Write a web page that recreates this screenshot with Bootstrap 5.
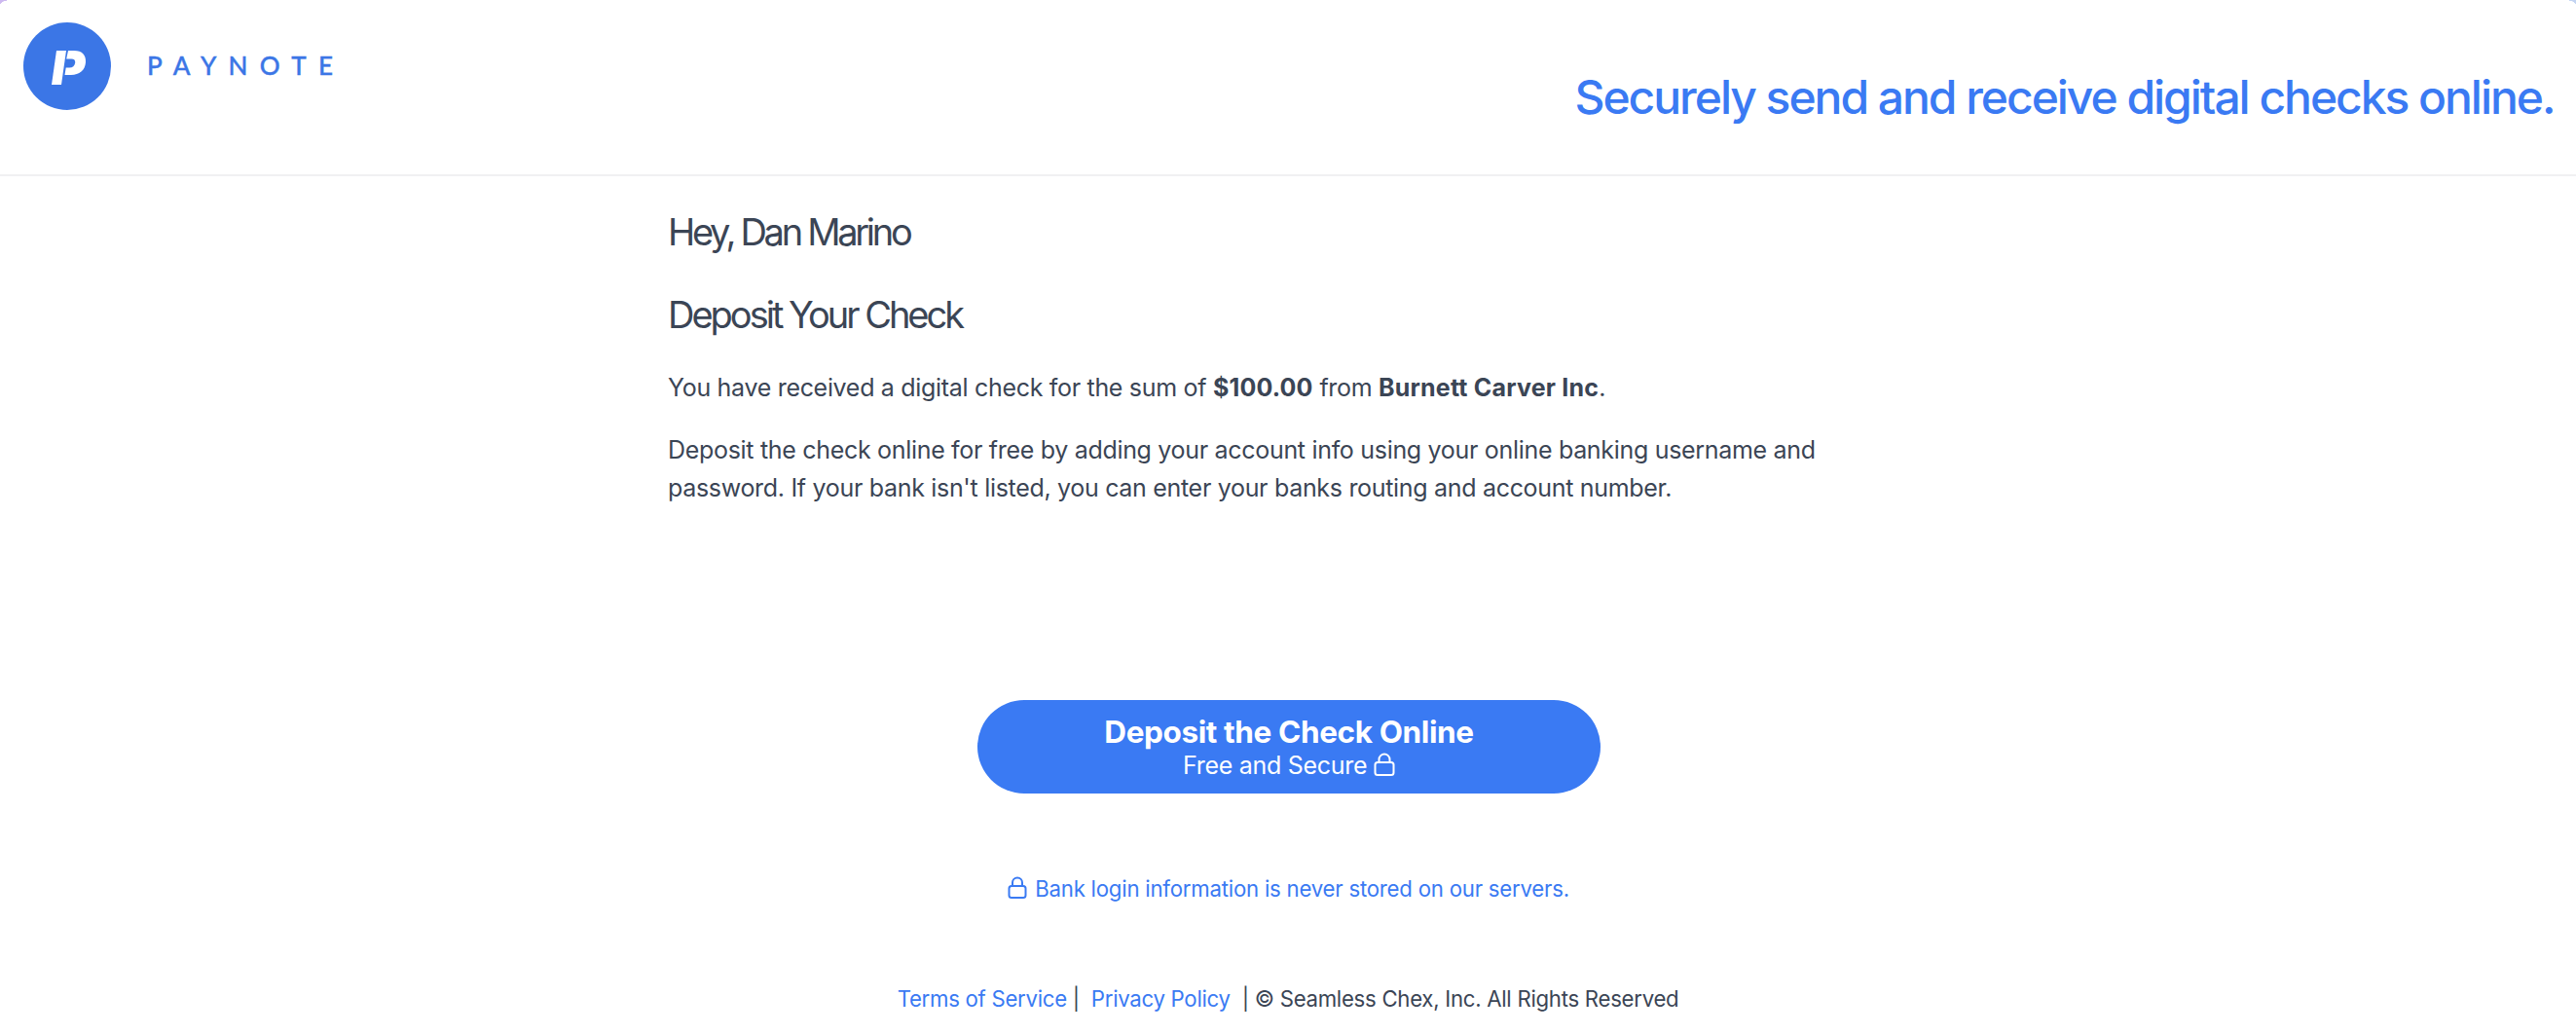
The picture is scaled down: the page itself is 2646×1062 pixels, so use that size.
<!doctype html>
<html lang="en">
<head>
<meta charset="utf-8">
<title>Paynote</title>
<link href="https://cdn.jsdelivr.net/npm/bootstrap@5.3.0/dist/css/bootstrap.min.css" rel="stylesheet">
<style>
html,body{height:100%;}
body{font-family:Inter,"Liberation Sans",sans-serif;font-size:25px;line-height:39.5px;color:#3b4555;background:#fff;letter-spacing:-.31px;}
a{color:#3a7af3;text-decoration:none;}
strong{letter-spacing:.19px;}
.pn-corner{position:absolute;top:0;width:7px;height:9px;}
.pn-corner-l{left:0;background:radial-gradient(circle at 100% 100%,transparent 70%,#cdb9f0 75%);}
.pn-corner-r{right:0;background:radial-gradient(circle at 0 100%,transparent 70%,#c3d4f2 75%);}
.pn-header{height:181px;border-bottom:2px solid #f0f0f2;padding:23px 22.500px 0 24px;}
.pn-logo{width:90px;height:90px;flex:none;}
.pn-brand{font-size:26px;line-height:24px;letter-spacing:12.300px;color:#3b76e6;margin:32px 0 0 37px;font-family:"Lato",Inter,sans-serif;font-weight:500;-webkit-text-stroke:.4px #3b76e6;}
.pn-tagline{font-size:48px;line-height:54px;font-weight:500;color:#3a7af3;letter-spacing:-2.040px;margin:50px 0 0;}
.pn-main{width:1274px;padding-right:2px;}
.pn-h{font-size:38px;line-height:44px;font-weight:400;letter-spacing:-3px;color:#3b4555;}
.pn-hi{margin:35px 0 0;letter-spacing:-3.300px;}
.pn-sub{margin:41px 0 0;}
.pn-p1{margin:34px 0 0;}
.pn-p2{margin:24px 0 0;}
.pn-btn{width:640px;height:96px;border-radius:48px;background:#3a7af3;color:#fff;margin:197px 0 0 4px;border:0;padding:0;}
.pn-btn:hover{background:#3a7af3;color:#fff;}
.pn-btn-a{display:block;font-size:31.5px;line-height:38px;font-weight:700;letter-spacing:-.38px;}
.pn-btn-b{display:block;font-size:25px;line-height:30px;font-weight:400;letter-spacing:-.3px;}
.pn-lock{display:inline-block;vertical-align:-2px;}
.pn-note-lock{margin-right:2px;}
.pn-note{font-size:22.2px;line-height:30px;color:#3a7af3;margin:83px 0 0;letter-spacing:-.22px;padding-left:3px;}
.pn-foot{font-size:22.2px;line-height:30px;margin:83px 0 0;white-space:pre-wrap;letter-spacing:-.28px;padding-left:2px;}
</style>
</head>
<body>
<div class="pn-corner pn-corner-l"></div>
<div class="pn-corner pn-corner-r"></div>
<header class="pn-header d-flex justify-content-between">
  <div class="d-flex">
    <svg class="pn-logo" viewBox="0 0 90 90" role="img" aria-label="Paynote logo">
      <circle cx="45" cy="45" r="45" fill="#3b76e6"/>
      <path d="M34 29h10l-5 35H29z" fill="#fff"/>
      <path d="M46 29h6c8.500 0 12.500 4.500 12 12-.5 8-6.500 13-15 13h-6.500l1.200-7.500h3.500c3.500 0 5.500-2 6-5 .3-2.500-1-4-3.800-4h-5.200z" fill="#fff"/>
    </svg>
    <div class="pn-brand">PAYNOTE</div>
  </div>
  <p class="pn-tagline">Securely send and receive digital checks online.</p>
</header>
<main class="pn-main mx-auto">
  <h1 class="pn-h pn-hi">Hey, Dan Marino</h1>
  <h2 class="pn-h pn-sub">Deposit Your Check</h2>
  <p class="pn-p1">You have received a digital check for the sum of <strong>$100.00</strong> from <strong>Burnett Carver Inc</strong>.</p>
  <p class="pn-p2 pe-5">Deposit the check online for free by adding your account info using your online banking username and password. If your bank isn't listed, you can enter your banks routing and account number.</p>
  <div class="text-center">
    <a href="#" class="btn pn-btn d-inline-flex flex-column justify-content-center">
      <span class="pn-btn-a">Deposit the Check Online</span>
      <span class="pn-btn-b">Free and Secure <svg class="pn-lock" width="22" height="24" viewBox="0 0 22 24" fill="none" stroke="currentColor" stroke-width="2"><rect x="1.500" y="10" width="19" height="13" rx="2.500"/><path d="M5.500 10V7a5.500 5.500 0 0 1 11 0v3"/></svg></span>
    </a>
    <p class="pn-note"><svg class="pn-lock pn-note-lock" width="20" height="23" viewBox="0 0 20 23" fill="none" stroke="currentColor" stroke-width="2"><rect x="1.500" y="10" width="17" height="12" rx="2.500"/><path d="M5 10V6.500a5 5 0 0 1 10 0V10"/></svg> Bank login information is never stored on our servers.</p>
    <p class="pn-foot"><a href="#">Terms of Service</a> |  <a href="#">Privacy Policy</a>  | © Seamless Chex, Inc. All Rights Reserved</p>
  </div>
</main>
</body>
</html>
